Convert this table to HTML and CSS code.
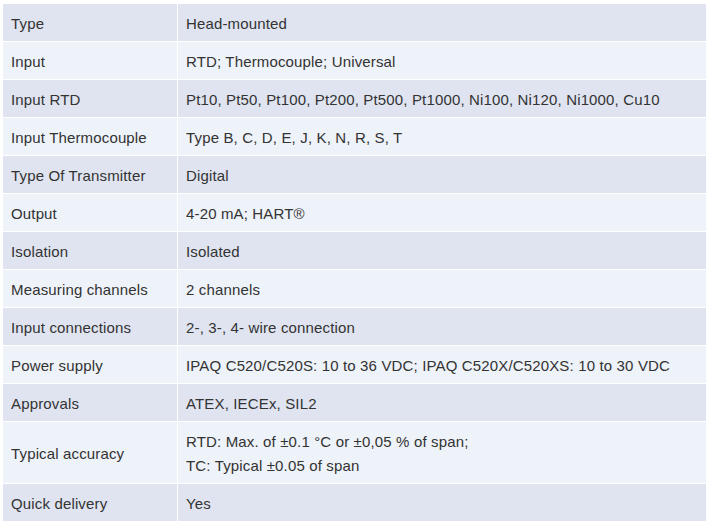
FILE: index.html
```html
<!DOCTYPE html>
<html>
<head>
<meta charset="utf-8">
<link rel="stylesheet" href="styles.css">
</head>
<body>
<table class="spec">
<tbody>
<tr class="dark"><td class="k">Type</td><td class="v">Head-mounted</td></tr>
<tr class="light"><td class="k">Input</td><td class="v">RTD; Thermocouple; Universal</td></tr>
<tr class="dark"><td class="k">Input RTD</td><td class="v">Pt10, Pt50, Pt100, Pt200, Pt500, Pt1000, Ni100, Ni120, Ni1000, Cu10</td></tr>
<tr class="light"><td class="k">Input Thermocouple</td><td class="v">Type B, C, D, E, J, K, N, R, S, T</td></tr>
<tr class="dark"><td class="k">Type Of Transmitter</td><td class="v">Digital</td></tr>
<tr class="light"><td class="k">Output</td><td class="v">4-20 mA; HART®</td></tr>
<tr class="dark"><td class="k">Isolation</td><td class="v">Isolated</td></tr>
<tr class="light"><td class="k">Measuring channels</td><td class="v">2 channels</td></tr>
<tr class="dark"><td class="k">Input connections</td><td class="v">2-, 3-, 4- wire connection</td></tr>
<tr class="light"><td class="k">Power supply</td><td class="v">IPAQ C520/C520S: 10 to 36 VDC; IPAQ C520X/C520XS: 10 to 30 VDC</td></tr>
<tr class="dark"><td class="k">Approvals</td><td class="v">ATEX, IECEx, SIL2</td></tr>
<tr class="light"><td class="k">Typical accuracy</td><td class="v">RTD: Max. of ±0.1 °C or ±0,05 % of span;<br>TC: Typical ±0.05 of span</td></tr>
<tr class="dark"><td class="k">Quick delivery</td><td class="v">Yes</td></tr>
</tbody>
</table>
</body>
</html>
```
FILE: styles.css
```css
html, body {
  margin: 0;
  padding: 0;
  background: #ffffff;
}
body {
  padding: 4px 4px 0 3px;
  font-family: "Liberation Sans", Arial, sans-serif;
  font-size: 15px;
  letter-spacing: 0.15px;
  color: #333333;
}
.spec {
  width: 703px;
  border-collapse: collapse;
  table-layout: fixed;
}
.spec td {
  padding: 8px 8px 5px 8px;
  line-height: 24px;
  vertical-align: middle;
  border: 1px solid #ffffff;
  white-space: nowrap;
}
.spec tr:first-child td { border-top: none; }
.spec td.k { width: 158px; border-left: none; }
.spec td.v { border-right: none; }
.spec tr.dark td { background: #dfe4f0; }
.spec tr.light td { background: #eef2f9; }
```
